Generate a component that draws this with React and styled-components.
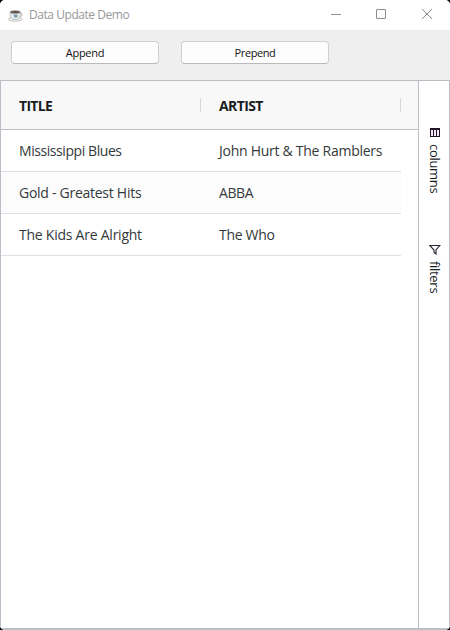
import React from "react";
import styled, { createGlobalStyle } from "styled-components";

const GlobalStyle = createGlobalStyle`
  *, *::before, *::after { box-sizing: border-box; }
  body { margin: 0; background: #000; }
`;

const Window = styled.main`
  width: 450px;
  height: 630px;
  display: flex;
  flex-direction: column;
  overflow: hidden;
  border-radius: 5px;
  background: #efefef;
  font-family: "Open Sans", "Noto Sans", sans-serif;
`;

const TitleBar = styled.header`
  height: 30px;
  flex: none;
  display: flex;
  align-items: center;
  padding-left: 8px;
  background: #fff;
`;

const WindowTitle = styled.h1`
  margin: 0 auto 0 6px;
  font-size: 12px;
  font-weight: 400;
  line-height: 30px;
  letter-spacing: -0.45px;
  color: #999;
  white-space: nowrap;
`;

const WindowControls = styled.div`
  display: flex;
  align-self: flex-start;
  height: 28px;
`;

const WindowButton = styled.button`
  width: ${(p) => p.$width}px;
  height: 28px;
  display: grid;
  place-items: center;
  padding: 0;
  border: 0;
  background: none;
  color: #8c8c8c;
`;

const Toolbar = styled.div`
  height: 50px;
  flex: none;
  display: flex;
  align-items: flex-start;
  gap: 22px;
  padding: 11px 11px 0;
`;

const ActionButton = styled.button`
  width: 148px;
  height: 23px;
  padding: 0;
  border: 1px solid #d0d0d0;
  border-bottom-color: #bababa;
  border-radius: 4px;
  background: #fdfdfd;
  color: #111;
  font-family: "Open Sans", "Noto Sans", sans-serif;
  font-size: 11px;
  line-height: 21px;
  letter-spacing: ${(p) => p.$tracking}px;
`;

const GridFrame = styled.section`
  flex: 1;
  display: flex;
  border: 1px solid #babfc7;
  border-bottom-width: 2px;
  background: #fff;
`;

const GridBody = styled.div`
  width: 417px;
  flex: none;
`;

const HeaderRow = styled.div`
  height: 49px;
  display: flex;
  border-bottom: 1px solid #babfc7;
  background: #f8f8f8;
`;

const HeaderCell = styled.div`
  width: 200px;
  display: flex;
  align-items: center;
  justify-content: space-between;
  padding-left: 18px;
  font-size: 14px;
  font-weight: 700;
  color: #181d1f;

  &::after {
    content: "";
    width: 1px;
    height: 14px;
    background: #d5d8dc;
  }
`;

const HeaderLabel = styled.span`
  letter-spacing: ${(p) => p.$tracking}px;
  line-height: 20px;
  padding-top: 2px;
`;

const DataRow = styled.div`
  width: 400px;
  height: 42px;
  display: flex;
  border-bottom: 1px solid #dde2e6;
  background: ${(p) => (p.$odd ? "#fcfcfc" : "#fff")};
`;

const DataCell = styled.div`
  width: 200px;
  padding-left: 18px;
  font-size: 14px;
  line-height: 42px;
  letter-spacing: ${(p) => p.$tracking}px;
  white-space: nowrap;
  color: #34393b;
`;

const SideBar = styled.aside`
  flex: 1;
  display: flex;
  flex-direction: column;
  align-items: center;
  gap: 48px;
  padding: 47px 0 0 1px;
  border-left: 1px solid #babfc7;
`;

const SideTab = styled.button`
  display: flex;
  flex-direction: column;
  align-items: center;
  justify-content: flex-start;
  gap: ${(p) => p.$gap}px;
  width: 30px;
  height: ${(p) => p.$height}px;
  padding: 0;
  border: 0;
  background: none;
  color: #181d1f;
`;

const SideLabel = styled.span`
  writing-mode: vertical-rl;
  font-family: "Open Sans", "Noto Sans", sans-serif;
  font-size: 13px;
  line-height: 16px;
  letter-spacing: ${(p) => p.$tracking}px;
`;

const CoffeeIcon = () => (
  <svg width="15" height="13" viewBox="0 0 15 13" fill="none">
    <ellipse cx="7.3" cy="10.2" rx="6.8" ry="2" fill="#f4f4f4" stroke="#aaa" strokeWidth=".7" />
    <path d="M12 4.2c3-.8 3 3.5-1 4" stroke="#aaa" />
    <path d="M2 3.2c0 4 1.3 7.3 3.2 7.3h4.3c1.9 0 3-3.3 3-7.3z" fill="#ececec" stroke="#aaa" strokeWidth=".7" />
    <ellipse cx="7.2" cy="3.1" rx="5.1" ry="1.5" fill="#5b514c" stroke="#aaa" strokeWidth=".6" />
    <path d="M5.5 5.5h4v3H6.2z" fill="#7b9eaf" />
  </svg>
);

const ColumnsIcon = () => (
  <svg width="10" height="9" viewBox="0 0 10 9" shapeRendering="crispEdges">
    <path d="M0 0h10v9H0z" fill="#1d1426" />
    <path d="M1 2h2v6H1zM4 2h2v6H4zM7 2h2v6H7z" fill="#f5e6fa" />
  </svg>
);

const FilterIcon = () => (
  <svg width="12" height="11" viewBox="0 0 12 11" fill="none" stroke="#2b2433">
    <path d="M.8 1.500h10L7 6v4L5 8.200V6z" strokeWidth="1.1" />
  </svg>
);

const rows = [
  { title: "Mississippi Blues", artist: "John Hurt & The Ramblers", tt: -0.43, at: -0.27 },
  { title: "Gold - Greatest Hits", artist: "ABBA", tt: -0.27, at: -0.4 },
  { title: "The Kids Are Alright", artist: "The Who", tt: -0.24, at: -0.3 },
];

export default function App() {
  return (
    <>
      <GlobalStyle />
      <Window>
        <TitleBar>
          <CoffeeIcon />
          <WindowTitle>Data Update Demo</WindowTitle>
          <WindowControls>
            <WindowButton $width={45} aria-label="Minimize">
              <svg width="10" height="10" stroke="currentColor"><path d="M0 5.5h10" /></svg>
            </WindowButton>
            <WindowButton $width={45} aria-label="Maximize">
              <svg width="10" height="10" fill="none" stroke="currentColor"><rect x=".5" y=".5" width="9" height="9" rx=".5" /></svg>
            </WindowButton>
            <WindowButton $width={47} aria-label="Close">
              <svg width="10" height="10" stroke="currentColor"><path d="M0 0l10 10M10 0L0 10" /></svg>
            </WindowButton>
          </WindowControls>
        </TitleBar>
        <Toolbar>
          <ActionButton $tracking={-0.3}>Append</ActionButton>
          <ActionButton $tracking={-0.4}>Prepend</ActionButton>
        </Toolbar>
        <GridFrame>
          <GridBody>
            <HeaderRow>
              <HeaderCell><HeaderLabel $tracking={-0.7}>TITLE</HeaderLabel></HeaderCell>
              <HeaderCell><HeaderLabel $tracking={-0.6}>ARTIST</HeaderLabel></HeaderCell>
            </HeaderRow>
            {rows.map((r, i) => (
              <DataRow key={r.title} $odd={i % 2 === 1}>
                <DataCell $tracking={r.tt}>{r.title}</DataCell>
                <DataCell $tracking={r.at}>{r.artist}</DataCell>
              </DataRow>
            ))}
          </GridBody>
          <SideBar>
            <SideTab $height={68} $gap={7}>
              <ColumnsIcon />
              <SideLabel $tracking={-0.3}>columns</SideLabel>
            </SideTab>
            <SideTab $height={52} $gap={6}>
              <FilterIcon />
              <SideLabel $tracking={-0.3}>filters</SideLabel>
            </SideTab>
          </SideBar>
        </GridFrame>
      </Window>
    </>
  );
}
